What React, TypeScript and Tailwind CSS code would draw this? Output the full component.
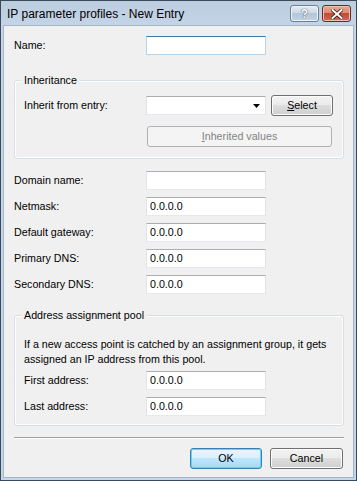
import React from 'react';

const font = { fontFamily: '"Liberation Sans", Arial, sans-serif' };

function TextBox({ value = '', focus = false }: { value?: string; focus?: boolean }) {
  return (
    <div
      className={
        'w-[120px] h-[19px] bg-white border flex items-center pl-[3px] text-[10.7px] text-black ' +
        (focus
          ? 'border-[#b7d4ec] border-t-[#3d7bad]'
          : 'border-[#e2e3ea] border-t-[#abadb3] border-b-[#e3e9ef]')
      }
    >
      {value}
    </div>
  );
}

function Row({ label, children, indent = false }: { label: string; children: React.ReactNode; indent?: boolean }) {
  return (
    <div className="flex items-center h-[19px]">
      <div className={(indent ? 'w-[122px]' : 'w-[132px]') + ' text-[10.7px] text-black'}>{label}</div>
      {children}
    </div>
  );
}

function Button({ children, className = '', primary = false }: { children: React.ReactNode; className?: string; primary?: boolean }) {
  return (
    <div
      className={
        'h-[21px] rounded-[3px] border flex items-center justify-center text-[10.7px] text-black ' +
        (primary
          ? 'border-[#3c7fb1] shadow-[inset_0_0_0_1px_#5fd6f5] bg-[linear-gradient(#eaf6fd_0%,#d9f0fc_50%,#bee6fd_50%,#a7d9f5_100%)] '
          : 'border-[#707070] shadow-[inset_0_0_0_1px_#fcfcfc] bg-[linear-gradient(#f2f2f2_0%,#ebebeb_50%,#dddddd_50%,#cfcfcf_100%)] ') +
        className
      }
    >
      {children}
    </div>
  );
}

function Group({ title, children, className = '' }: { title: string; children: React.ReactNode; className?: string }) {
  return (
    <div className={'relative border border-[#d5dfe5] rounded-[3px] shadow-[inset_0_0_0_1px_#ffffff] ' + className}>
      <div className="absolute -top-[8px] left-[6px] px-[3px] bg-[#f0f0f0] text-[10.7px] text-black leading-[14px]">{title}</div>
      {children}
    </div>
  );
}

export default function App() {
  return (
    <div style={font} className="w-[357px] h-[481px] border border-[#3a4a5a] bg-[linear-gradient(#bccde0,#c6d6e8_30px,#c4d6ea)] flex flex-col px-[2px] pb-[2px]">
      {/* title bar */}
      <div className="h-[24px] flex items-center justify-between pl-[4px] pr-[3px]">
        <span className="text-[12px] text-black mt-[1px]">IP parameter profiles - New Entry</span>
        <div className="flex gap-[3px] self-start mt-[4px]">
          <div className="w-[29px] h-[17px] rounded-[3px] border border-[#6d7f95] bg-[linear-gradient(#e4ebf3_0%,#ccd8e6_50%,#b5c6da_50%,#c3d3e6_100%)] flex items-center justify-center shadow-[inset_0_0_0_1px_#eef3f9]">
            <span className="text-[12px] font-bold text-white leading-none [text-shadow:0_0_1px_#3b4a5c,0_0_1px_#3b4a5c]">?</span>
          </div>
          <div className="w-[29px] h-[17px] rounded-[3px] border border-[#6a2a22] bg-[linear-gradient(#e6a996_0%,#d98a74_50%,#c44a31_50%,#d06d52_100%)] flex items-center justify-center shadow-[inset_0_0_0_1px_#efc1b3]">
            <svg width="12" height="10" viewBox="0 0 12 10">
              <path d="M1.5 1 L10.5 9 M10.5 1 L1.5 9" stroke="#3a1a14" strokeWidth="3.6" strokeLinecap="square" />
              <path d="M1.5 1 L10.5 9 M10.5 1 L1.5 9" stroke="#ffffff" strokeWidth="2" strokeLinecap="square" />
            </svg>
          </div>
        </div>
      </div>
      {/* client area */}
      <div className="flex-1 bg-[#f0f0f0] border border-[#a7b5c4] flex flex-col pl-[10px] pr-[9px] pt-[10px]">
        <Row label="Name:">
          <TextBox focus />
        </Row>

        <Group title="Inheritance" className="mt-[25px] pl-[9px] pt-[15px] pb-[11px]">
          <Row label="Inherit from entry:" indent>
            <div className="w-[120px] h-[19px] bg-white border border-[#e2e3ea] border-t-[#abadb3] border-b-[#e3e9ef] flex items-center justify-end pr-[5px]">
              <svg width="7" height="4" viewBox="0 0 7 4">
                <path d="M0 0 H7 L3.5 4 Z" fill="#000" />
              </svg>
            </div>
            <Button className="w-[62px] ml-[5px]">
              <span><span className="underline">S</span>elect</span>
            </Button>
          </Row>
          <div className="flex mt-[11px] pl-[123px]">
            <div className="w-[185px] h-[21px] rounded-[3px] border border-[#adb2b5] bg-[#f4f4f4] flex items-center justify-center text-[10.7px] text-[#838383]">
              <span><span className="underline">I</span>nherited values</span>
            </div>
          </div>
        </Group>

        <div className="flex flex-col gap-[7px] mt-[12px]">
          <Row label="Domain name:">
            <TextBox />
          </Row>
          <Row label="Netmask:">
            <TextBox value="0.0.0.0" />
          </Row>
          <Row label="Default gateway:">
            <TextBox value="0.0.0.0" />
          </Row>
          <Row label="Primary DNS:">
            <TextBox value="0.0.0.0" />
          </Row>
          <Row label="Secondary DNS:">
            <TextBox value="0.0.0.0" />
          </Row>
        </div>

        <Group title="Address assignment pool" className="mt-[21px] pl-[9px] pt-[21px] pb-[9px]">
          <p className="text-[10.7px] text-black leading-[15px]">
            If a new access point is catched by an assignment group, it gets
            <br />
            assigned an IP address from this pool.
          </p>
          <div className="flex flex-col gap-[7px] mt-[4px]">
            <Row label="First address:" indent>
              <TextBox value="0.0.0.0" />
            </Row>
            <Row label="Last address:" indent>
              <TextBox value="0.0.0.0" />
            </Row>
          </div>
        </Group>

        <div className="mt-[11px] border-t border-t-[#a0a0a0] border-b border-b-white" />

        <div className="flex justify-end gap-[8px] mt-[9px] pr-[1px]">
          <Button primary className="w-[72px]">OK</Button>
          <Button className="w-[73px]">Cancel</Button>
        </div>
      </div>
    </div>
  );
}
